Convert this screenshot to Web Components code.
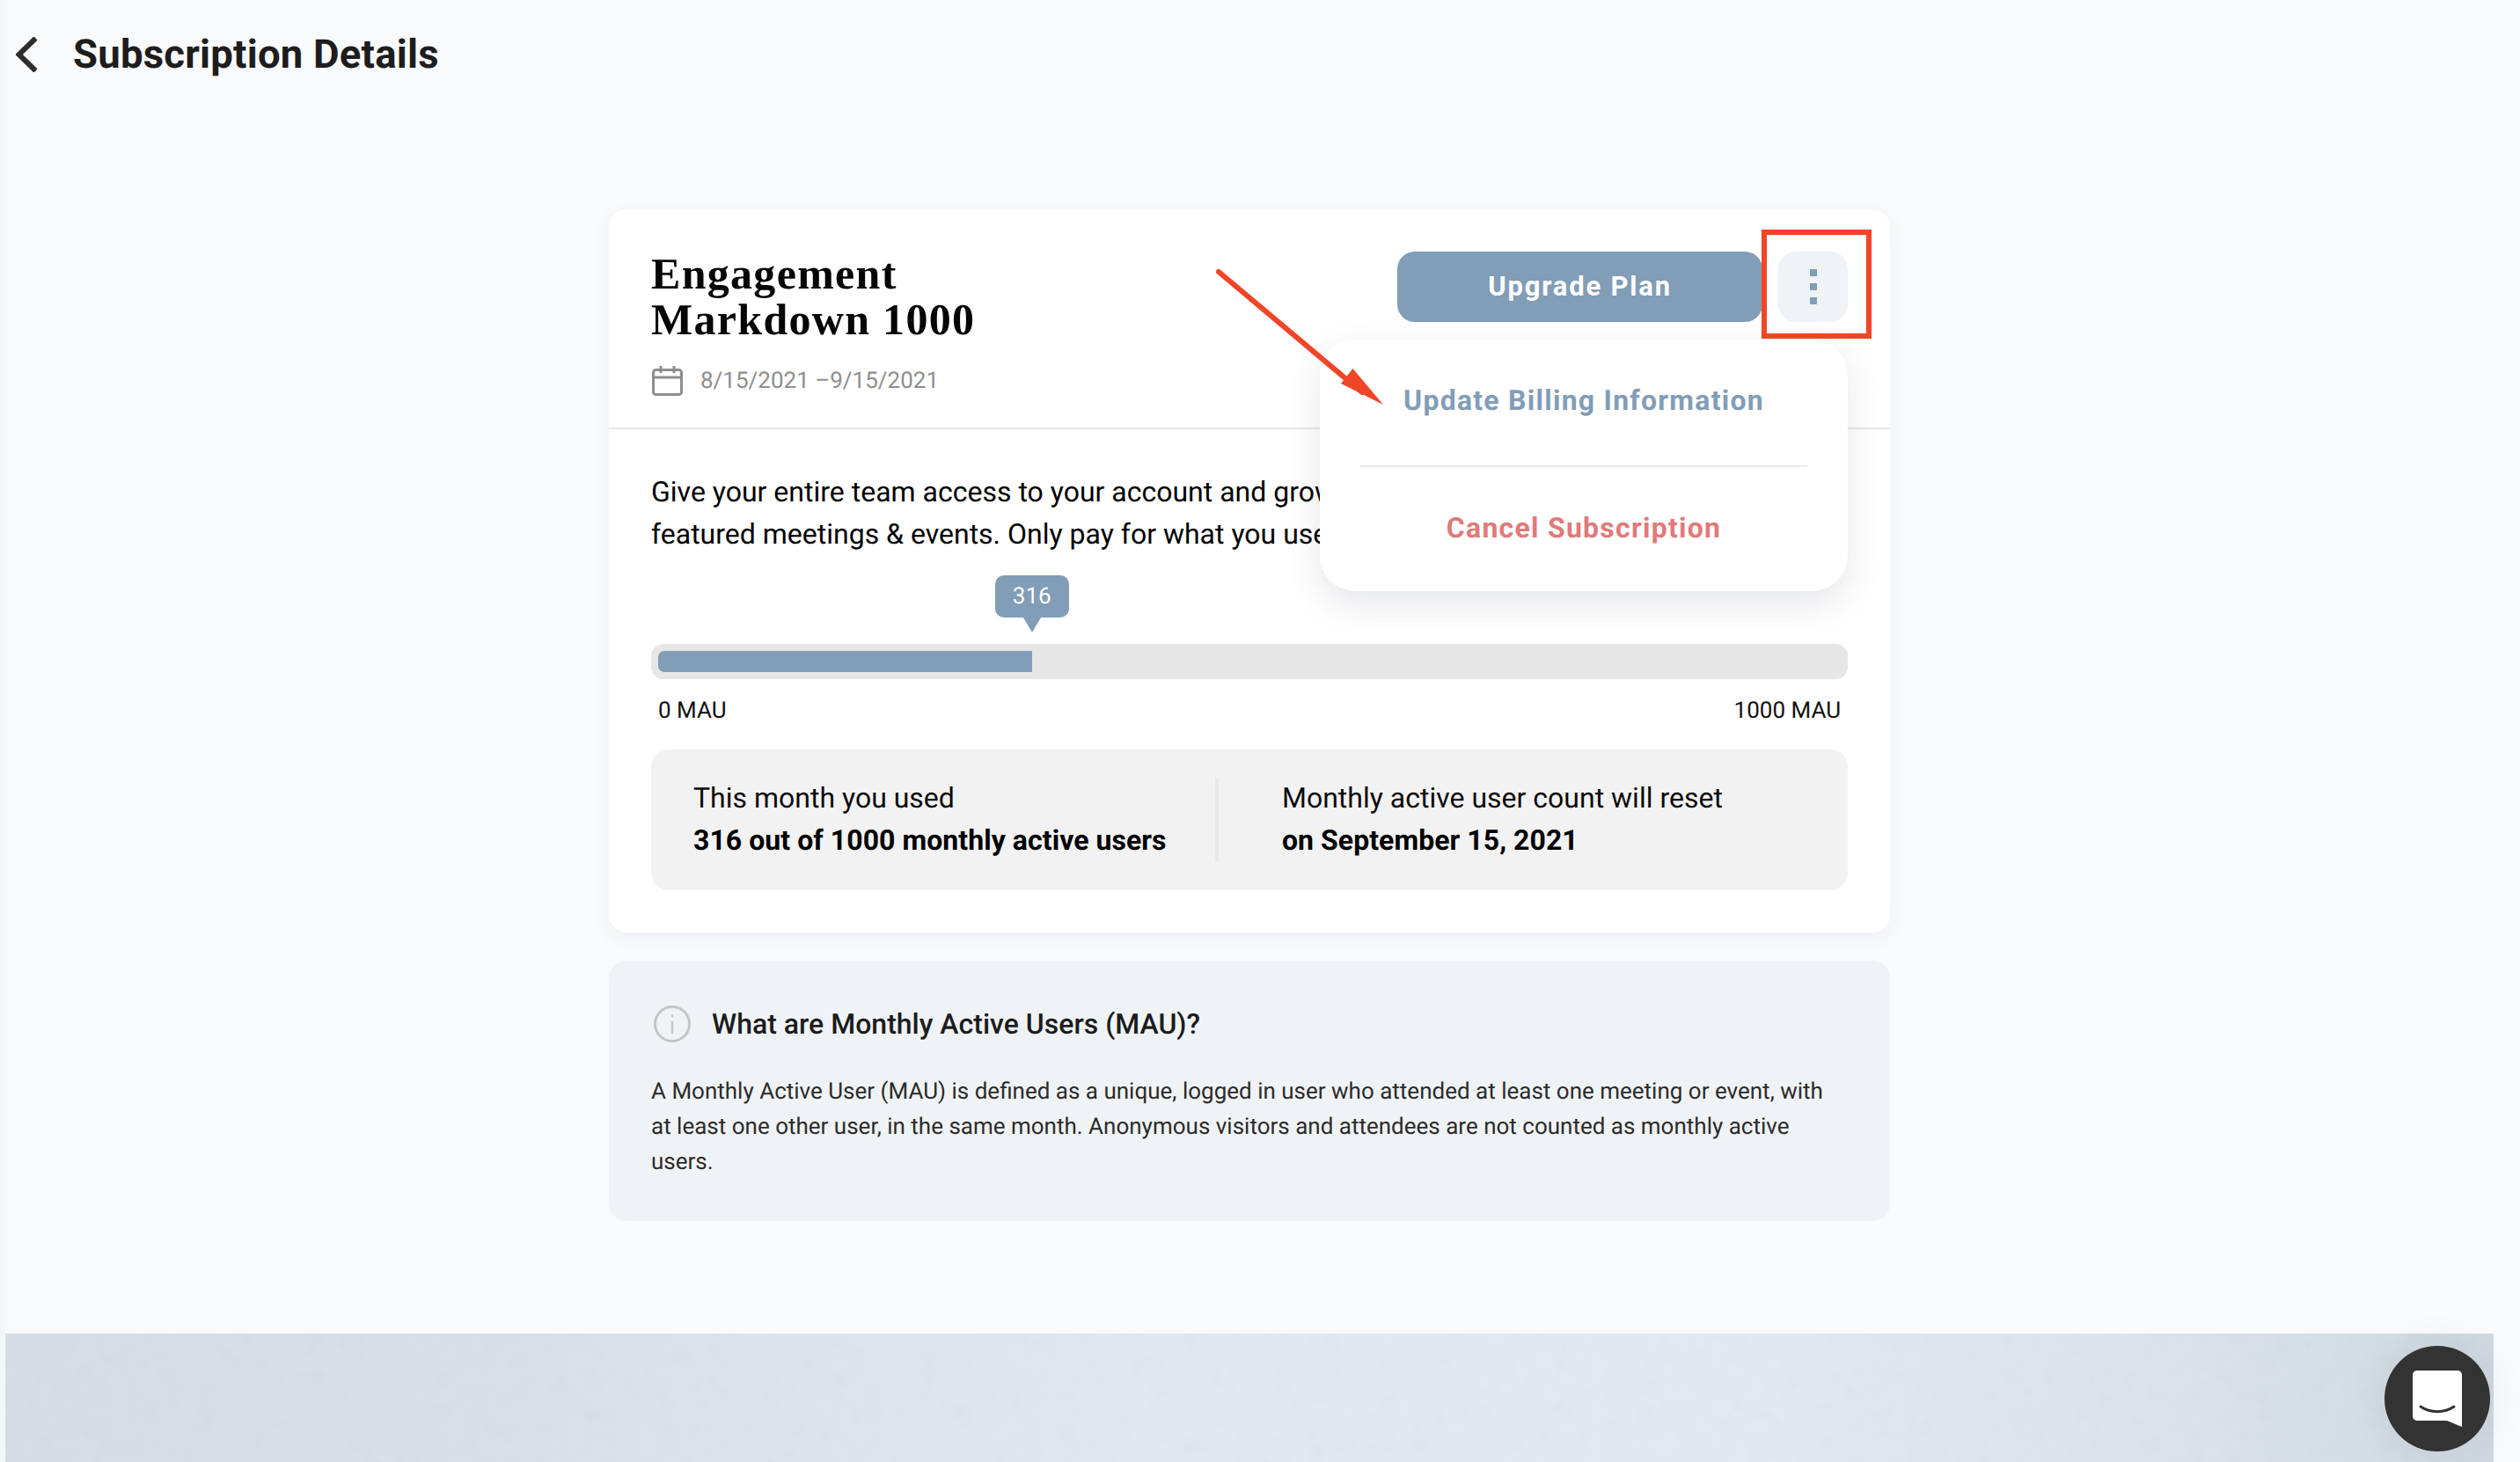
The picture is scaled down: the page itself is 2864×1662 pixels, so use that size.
<!DOCTYPE html>
<html lang="en">
<head>
<meta charset="utf-8">
<title>Subscription Details</title>
<style>
  html, body { margin: 0; height: 100%; }
  body {
    background: #f9fafc;
    font-family: Roboto, "Liberation Sans", sans-serif;
    text-rendering: geometricPrecision;
    overflow: hidden;
  }
</style>
</head>
<body>
<subscription-page>
  <page-header slot="header" title="Subscription Details"></page-header>
  <plan-card slot="main">
    <plan-meter used="316" max="1000"></plan-meter>
    <usage-summary></usage-summary>
  </plan-card>
  <info-note slot="main" heading="What are Monthly Active Users (MAU)?">
    A Monthly Active User (MAU) is defined as a unique, logged in user who attended at least one meeting or event, with at least one other user, in the same month. Anonymous visitors and attendees are not counted as monthly active users.
  </info-note>
  <footer-band slot="footer"></footer-band>
  <chat-launcher slot="overlay"></chat-launcher>
</subscription-page>

<script>
// Page shell: header, content column, footer band
class SubscriptionPage extends HTMLElement {
  constructor() {
    super();
    this.attachShadow({ mode: 'open' });
  }

  connectedCallback() {
    this.shadowRoot.innerHTML = `
      <style>
        :host {
          display: flex;
          flex-direction: column;
          position: relative;
          height: 1662px;
          overflow: hidden;
          color: #000;
        }
        .left-edge {
          position: absolute;
          left: 0; top: 0; bottom: 0;
          width: 10px;
          background: linear-gradient(to right, rgba(0,0,0,.025), rgba(0,0,0,0));
        }
        main {
          flex: 1;
          display: flex;
          flex-direction: column;
          gap: 32px;
          width: 1456px;
          margin-left: 692px;
          padding-top: 112px;
        }
      </style>
      <div class="left-edge"></div>
      <slot name="header"></slot>
      <main><slot name="main"></slot></main>
      <slot name="footer"></slot>
      <slot name="overlay"></slot>
    `;
  }
}

class PageHeader extends HTMLElement {
  constructor() {
    super();
    this.attachShadow({ mode: 'open' });
  }

  connectedCallback() {
    this.shadowRoot.innerHTML = `
      <style>
        :host {
          display: flex;
          align-items: center;
          gap: 41px;
          height: 126px;
          padding: 0 0 2px 18px;
          box-sizing: border-box;
        }
        svg { display: block; flex: none; }
        h1 {
          margin: 2px 0 0;
          font: 700 45.500px/52px Roboto, sans-serif;
          color: #1d1d1d;
          letter-spacing: .2px;
        }
      </style>
      <svg width="24" height="40" viewBox="0 0 24 40">
        <path d="M22.500 1.500 3.500 20l19 18.500" fill="none" stroke="#2f2c31" stroke-width="6"/>
      </svg>
      <h1>${this.getAttribute('title')}</h1>
    `;
  }
}

// Main card. The slot takes the meter and the summary box.
class PlanCard extends HTMLElement {
  constructor() {
    super();
    this.attachShadow({ mode: 'open' });
  }

  connectedCallback() {
    this.shadowRoot.innerHTML = `
      <style>
        :host {
          display: block;
          position: relative;
          background: #fff;
          border-radius: 20px;
          box-shadow: 0 6px 24px rgba(30, 50, 80, .05);
        }
        header {
          display: flex;
          justify-content: space-between;
          align-items: flex-start;
          height: 248px;
          padding: 0 48px;
          border-bottom: 2px solid #e8e8e8;
        }
        .plan { padding-top: 47px; }
        h2 {
          margin: 0;
          font: 700 50px/52px "Liberation Serif", serif;
          color: #050505;
          width: 420px;
          letter-spacing: 1.300px;
        }
        .dates {
          display: flex;
          align-items: center;
          gap: 20px;
          margin-top: 26px;
          font-size: 26px;
          line-height: 34px;
          color: #8e8e8e;
        }
        .dates svg { display: block; margin-left: 1px; }
        .actions {
          display: flex;
          gap: 18px;
          padding-top: 48px;
        }
        .upgrade {
          width: 415px;
          height: 80px;
          border: 0;
          border-radius: 20px;
          background: #829db6;
          color: #fff;
          font: 700 31px/80px Roboto, sans-serif;
          letter-spacing: 1.800px;
          padding: 0;
        }
        .more {
          display: flex;
          flex-direction: column;
          align-items: center;
          justify-content: center;
          gap: 8px;
          width: 79px;
          height: 80px;
          border: 0;
          border-radius: 20px;
          background: #eff3f6;
          padding: 0;
        }
        .more i { display: block; width: 8px; height: 8px; background: #829db6; }
        .body { padding: 47px 48px 48px; }
        p {
          margin: 0;
          font-size: 32px;
          line-height: 48px;
          white-space: nowrap;
        }
        .highlight {
          position: absolute;
          left: 1310px;
          top: 23px;
          width: 125px;
          height: 124px;
          box-sizing: border-box;
          border: 6px solid #f14527;
        }
        .arrow {
          position: absolute;
          left: 680px;
          top: 60px;
          pointer-events: none;
        }
      </style>
      <header>
        <div class="plan">
          <h2>Engagement Markdown 1000</h2>
          <div class="dates">
            <svg width="35" height="35" viewBox="0 0 35 35" fill="none" stroke="#8e8e8e" stroke-width="3">
              <rect x="1.500" y="5.500" width="32" height="28" rx="3"/>
              <path d="M1.500 14h32M10 1v8M25 1v8"/>
            </svg>
            <span>8/15/2021 –9/15/2021</span>
          </div>
        </div>
        <div class="actions">
          <button class="upgrade">Upgrade Plan</button>
          <button class="more"><i></i><i></i><i></i></button>
        </div>
      </header>
      <div class="body">
        <p>Give your entire team access to your account and grow with fully<br>featured meetings &amp; events. Only pay for what you use.</p>
        <slot></slot>
      </div>
      <action-menu></action-menu>
      <div class="highlight"></div>
      <svg class="arrow" width="230" height="180" viewBox="0 0 230 180">
        <path d="M13 11 176 148" stroke="#f14527" stroke-width="6" stroke-linecap="round" fill="none"/>
        <path d="M200 162 165.500 121 152 138Z" fill="#f14527"/>
      </svg>
    `;
  }
}

class ActionMenu extends HTMLElement {
  constructor() {
    super();
    this.attachShadow({ mode: 'open' });
  }

  connectedCallback() {
    this.shadowRoot.innerHTML = `
      <style>
        :host {
          display: block;
          position: absolute;
          left: 808px;
          top: 148px;
          width: 600px;
          height: 286px;
          background: #fff;
          border-radius: 40px;
          box-shadow: 0 14px 40px rgba(40, 50, 70, .12);
          font: 700 32px/40px Roboto, sans-serif;
          letter-spacing: 1.250px;
          text-align: center;
        }
        div { height: 143px; box-sizing: border-box; }
        .update { padding-top: 49px; color: #829db6; }
        hr {
          margin: 0 46px;
          border: 0;
          height: 2px;
          background: #e8e8e8;
        }
        .cancel { padding-top: 49px; color: #e07a7a; }
      </style>
      <div class="update">Update Billing Information</div>
      <hr>
      <div class="cancel">Cancel Subscription</div>
    `;
  }
}

// Progress track with a callout above the end of the fill
class PlanMeter extends HTMLElement {
  constructor() {
    super();
    this.attachShadow({ mode: 'open' });
  }

  connectedCallback() {
    const used = Number(this.getAttribute('used'));
    const max = Number(this.getAttribute('max'));
    const pct = (used / max) * 100;
    this.shadowRoot.innerHTML = `
      <style>
        :host { display: block; padding-top: 101px; }
        .track {
          height: 40px;
          box-sizing: border-box;
          padding: 8px;
          background: #e6e6e6;
          border-radius: 14px;
        }
        .inner { position: relative; height: 24px; }
        .fill {
          height: 100%;
          background: #829db6;
          border-radius: 7px 0 0 7px;
        }
        .bubble {
          position: absolute;
          bottom: 62px;
          width: 84px;
          height: 48px;
          margin-left: -42px;
          background: #829db6;
          border-radius: 10px;
          color: #fff;
          font-size: 26px;
          line-height: 49px;
          text-align: center;
        }
        .bubble::after {
          content: '';
          position: absolute;
          left: 32px;
          top: 48px;
          border: solid transparent;
          border-width: 17px 10px 0;
          border-top-color: #829db6;
        }
        .labels {
          display: flex;
          justify-content: space-between;
          padding: 0 8px;
          margin-top: 18px;
          font-size: 26px;
          line-height: 36px;
          color: #111;
        }
      </style>
      <div class="track">
        <div class="inner">
          <div class="fill" style="width:${pct}%"></div>
          <div class="bubble" style="left:${pct}%">${used}</div>
        </div>
      </div>
      <div class="labels"><span>0 MAU</span><span>${max} MAU</span></div>
    `;
  }
}

class UsageSummary extends HTMLElement {
  constructor() {
    super();
    this.attachShadow({ mode: 'open' });
  }

  connectedCallback() {
    this.shadowRoot.innerHTML = `
      <style>
        :host {
          display: flex;
          align-items: center;
          height: 160px;
          margin-top: 26px;
          padding-left: 48px;
          background: #f2f2f2;
          border-radius: 20px;
          font-size: 32px;
          line-height: 48px;
          color: #0a0a0a;
        }
        .col { margin-top: -2px; }
        b { display: block; font-weight: 700; color: #000; letter-spacing: .05px; }
        .rule {
          width: 4px;
          height: 96px;
          margin: 0 72px 0 58px;
          background: #e8e8e8;
        }
        .first { width: 535px; white-space: nowrap; }
      </style>
      <div class="col first">This month you used<b>316 out of 1000 monthly active users</b></div>
      <div class="rule"></div>
      <div class="col">Monthly active user count will reset<b>on September 15, 2021</b></div>
    `;
  }
}

class InfoNote extends HTMLElement {
  constructor() {
    super();
    this.attachShadow({ mode: 'open' });
  }

  connectedCallback() {
    this.shadowRoot.innerHTML = `
      <style>
        :host {
          display: block;
          height: 296px;
          box-sizing: border-box;
          padding: 51px 48px 0;
          background: #f0f3f6;
          border-radius: 20px;
        }
        .head { display: flex; align-items: center; gap: 24px; height: 42px; padding-left: 3px; }
        svg { display: block; flex: none; }
        h3 {
          margin: 0;
          font: 500 32px/42px Roboto, sans-serif;
          color: #1c1c1c;
        }
        .text {
          margin-top: 36px;
          font-size: 26px;
          line-height: 40px;
          color: #2b2b2b;
        }
      </style>
      <div class="head">
        <svg width="42" height="42" viewBox="0 0 42 42" fill="none" stroke="#c4c4c4">
          <circle cx="21" cy="21" r="19.500" stroke-width="3"/>
          <path d="M21 18v14" stroke-width="2.500"/>
          <path d="M21 10.500v3" stroke-width="2.500"/>
        </svg>
        <h3>${this.getAttribute('heading')}</h3>
      </div>
      <div class="text"><slot></slot></div>
    `;
  }
}

// Blurred backdrop strip, with a little grain over the gradient
class FooterBand extends HTMLElement {
  constructor() {
    super();
    this.attachShadow({ mode: 'open' });
  }

  connectedCallback() {
    this.shadowRoot.innerHTML = `
      <style>
        :host {
          display: block;
          position: relative;
          height: 146px;
          margin: 0 30px 0 6px;
          background: linear-gradient(to right, #d6dde4 0%, #dae0e7 20%, #e2e8f0 45%, #e3e9f1 70%, #dbe2ea 88%, #d0d9e2 100%);
          overflow: hidden;
        }
        svg { position: absolute; inset: 0; opacity: .05; }
      </style>
      <svg width="100%" height="100%">
        <filter id="grain">
          <feTurbulence type="fractalNoise" baseFrequency=".05" numOctaves="3" seed="4"/>
          <feColorMatrix type="saturate" values="0"/>
        </filter>
        <rect width="100%" height="100%" filter="url(#grain)"/>
      </svg>
    `;
  }
}

class ChatLauncher extends HTMLElement {
  constructor() {
    super();
    this.attachShadow({ mode: 'open' });
  }

  connectedCallback() {
    this.shadowRoot.innerHTML = `
      <style>
        :host {
          display: flex;
          align-items: center;
          justify-content: center;
          position: absolute;
          left: 2710px;
          top: 1530px;
          width: 120px;
          height: 120px;
          border-radius: 50%;
          background: #333;
          box-shadow: 0 0 50px rgba(0, 0, 0, .07);
        }
      </style>
      <svg width="56" height="64" viewBox="0 0 56 64">
        <path d="M5 0h46a5 5 0 0 1 5 5v59L39 57H5a5 5 0 0 1-5-5V5a5 5 0 0 1 5-5Z" fill="#fff"/>
        <path d="M9 41c11 7.500 27 7.500 38 0" fill="none" stroke="#333" stroke-width="3" stroke-linecap="round"/>
      </svg>
    `;
  }
}

customElements.define('subscription-page', SubscriptionPage);
customElements.define('page-header', PageHeader);
customElements.define('plan-card', PlanCard);
customElements.define('action-menu', ActionMenu);
customElements.define('plan-meter', PlanMeter);
customElements.define('usage-summary', UsageSummary);
customElements.define('info-note', InfoNote);
customElements.define('footer-band', FooterBand);
customElements.define('chat-launcher', ChatLauncher);
</script>
</body>
</html>
